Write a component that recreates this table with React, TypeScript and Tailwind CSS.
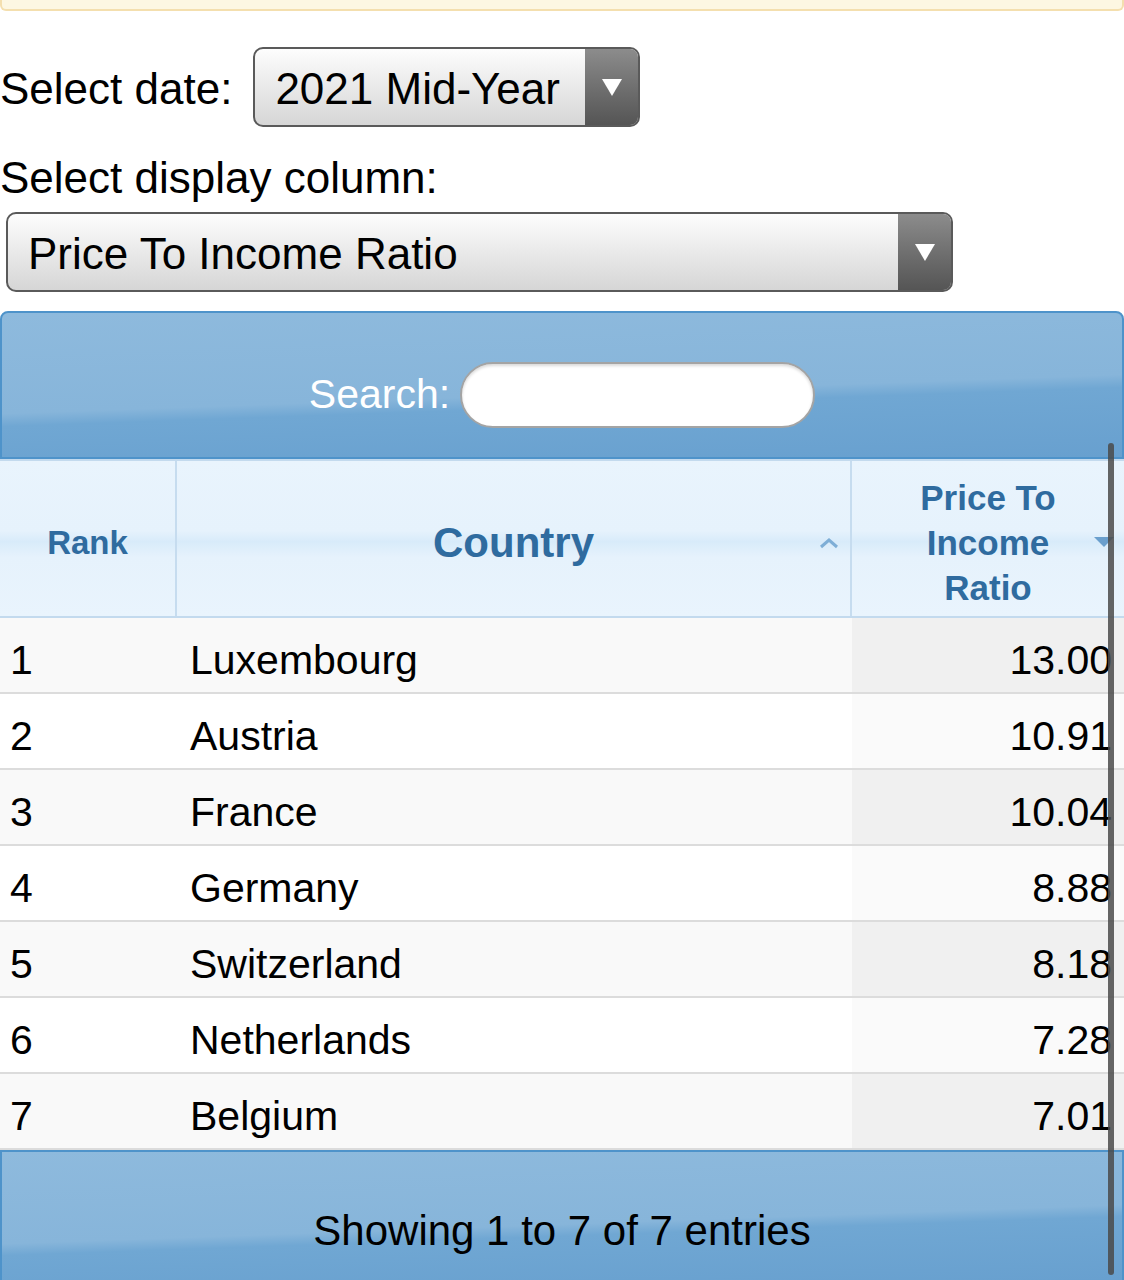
import React from 'react';

const rows = [
  { rank: 1, country: 'Luxembourg', value: '13.00' },
  { rank: 2, country: 'Austria', value: '10.91' },
  { rank: 3, country: 'France', value: '10.04' },
  { rank: 4, country: 'Germany', value: '8.88' },
  { rank: 5, country: 'Switzerland', value: '8.18' },
  { rank: 6, country: 'Netherlands', value: '7.28' },
  { rank: 7, country: 'Belgium', value: '7.01' },
];

function SelectBox({ label, width }: { label: string; width: string }) {
  return (
    <div className={`flex h-[80px] ${width} overflow-hidden rounded-[10px] border-2 border-[#5a5a5a] bg-gradient-to-b from-[#fdfdfd] to-[#d6d6d6]`}>
      <div className="flex flex-1 items-center pl-[20px] pt-[3px] text-[44px] text-black">{label}</div>
      <div className="flex w-[53px] items-center justify-center bg-gradient-to-b from-[#8c8c8c] to-[#555555]">
        <svg width="22" height="20" viewBox="0 0 22 20">
          <polygon points="1,2 21,2 11,19" fill="#ffffff" />
        </svg>
      </div>
    </div>
  );
}

const barBg =
  'bg-[linear-gradient(178deg,#8ebadd_0%,#87b5da_55%,#70a7d3_62%,#68a0cf_100%)]';

export default function App() {
  return (
    <div className="relative min-h-[1280px] overflow-hidden bg-white font-['Liberation_Sans',Arial,sans-serif] text-black">
      <div className="h-[11px] rounded-b-md border-x-2 border-b-2 border-[#f4dfae] bg-[#fdf7e2]" />

      <div className="mt-[36px] flex items-center">
        <span className="mr-[21px] pt-[4px] text-[44px] leading-none">Select date:</span>
        <SelectBox label="2021 Mid-Year" width="w-[387px]" />
      </div>

      <div className="mt-[26px] text-[44px] leading-[50px]">Select display column:</div>

      <div className="ml-[6px] mt-[9px]">
        <SelectBox label="Price To Income Ratio" width="w-[947px]" />
      </div>

      <div className="mt-[19px]">
        <div className={`flex h-[148px] items-center justify-center rounded-t-lg border-2 border-[#4e93ca] pt-[20px] ${barBg}`}>
          <span className="mr-[10px] text-[41px] text-white">Search:</span>
          <div className="h-[66px] w-[355px] rounded-full border-2 border-[#a4a4a4] bg-white shadow-[inset_0_2px_3px_rgba(0,0,0,0.15)]" />
        </div>

        <div className="grid h-[159px] grid-cols-[177px_675px_1fr] border-y-2 border-[#c3daee] bg-[linear-gradient(180deg,#e9f4fd_0%,#e6f2fc_45%,#d8ebfa_52%,#e6f2fc_62%,#e9f4fd_100%)] pt-[8px] font-bold text-[#2f6b9f]">
          <div className="-mt-[8px] flex items-center justify-center border-r-2 border-[#c6dcef] pt-[8px] text-[33px]">Rank</div>
          <div className="relative -mt-[8px] flex items-center justify-center border-r-2 border-[#c6dcef] pt-[8px] text-[42px]">
            Country
            <span className="absolute right-[10px] top-[76px]">
              <svg width="22" height="12" viewBox="0 0 22 12">
                <polyline points="3,10 11,3 19,10" fill="none" stroke="#7eaed6" strokeWidth="3" />
              </svg>
            </span>
          </div>
          <div className="relative flex items-center justify-center text-center text-[35px] leading-[45px]">
            <div>
              Price To
              <br />
              Income
              <br />
              Ratio
            </div>
            <span className="absolute right-[10px] top-[68px]">
              <svg width="20" height="11" viewBox="0 0 20 11">
                <polygon points="0,0 20,0 10,10" fill="#6a9fcd" />
              </svg>
            </span>
          </div>
        </div>

        {rows.map((r, i) => {
          const odd = i % 2 === 0;
          return (
            <div
              key={r.rank}
              className={`grid h-[76px] grid-cols-[177px_675px_1fr] border-b-2 border-[#dcdcdc] pt-[12px] text-[41px] last:border-b-0 ${odd ? 'bg-[#f9f9f9]' : 'bg-white'}`}
            >
              <div className="flex items-center pl-[10px]">{r.rank}</div>
              <div className="flex items-center pl-[13px]">{r.country}</div>
              <div className={`-mt-[12px] flex items-center justify-end pr-[12px] pt-[12px] ${odd ? 'bg-[#f0f0f0]' : 'bg-[#fafafa]'}`}>{r.value}</div>
            </div>
          );
        })}

        <div className={`flex h-[132px] items-end justify-center border-2 border-[#4e93ca] pb-[28px] ${barBg}`}>
          <span className="text-[42px] leading-none text-black">Showing 1 to 7 of 7 entries</span>
        </div>
      </div>

      <div className="absolute left-[1108px] top-[443px] h-[832px] w-[6px] rounded-full bg-[#4a4a4a]/85" />
    </div>
  );
}
